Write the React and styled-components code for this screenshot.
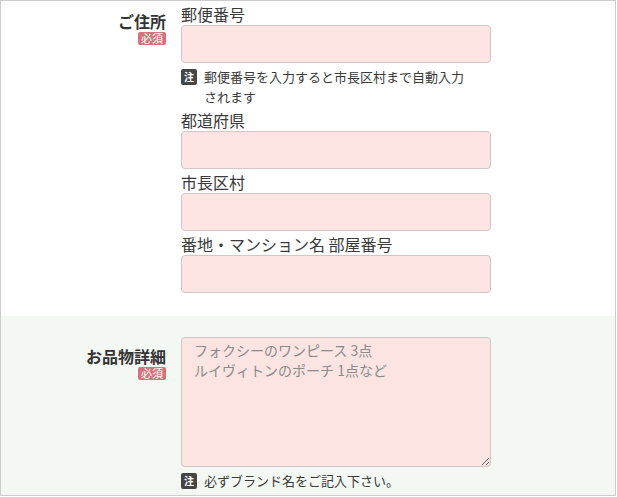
import React from "react";
import styled, { createGlobalStyle } from "styled-components";

const GlobalStyle = createGlobalStyle`
  body {
    margin: 0;
    background: #fff;
    font-family: "Noto Sans CJK JP", "Noto Sans", sans-serif;
    color: #333;
  }
`;

const FormTable = styled.div`
  width: 616px;
  box-sizing: border-box;
  border: 1px solid #ccc;
`;

const Row = styled.div`
  display: grid;
  grid-template-columns: 165px 310px;
  column-gap: 15px;
  padding: ${({ $pad }) => $pad};
  background: ${({ $bg }) => $bg};
`;

const Head = styled.div`
  display: flex;
  flex-direction: column;
  align-items: flex-end;
  padding-top: ${({ $top }) => $top}px;
`;

const HeadText = styled.div`
  font-size: 16px;
  font-weight: bold;
  line-height: 19px;
  color: #333;
`;

const Required = styled.span`
  display: inline-block;
  height: 13px;
  margin-top: 1px;
  padding: 0 3px;
  border-radius: 2px;
  background: #d6737a;
  color: #fff;
  font-size: 11px;
  line-height: 13px;
`;

const Fields = styled.div`
  display: flex;
  flex-direction: column;
`;

const FieldLabel = styled.label`
  display: block;
  padding-top: 2px;
  font-size: 16px;
  line-height: 22px;
  color: #3a3a3a;
`;

const TextInput = styled.input`
  display: block;
  width: 310px;
  height: 38px;
  box-sizing: border-box;
  margin: 0;
  border: 1px solid #d2c6c6;
  border-radius: 4px;
  background: #ffe4e4;
  outline: none;
`;

const TextArea = styled.textarea`
  display: block;
  width: 310px;
  height: 130px;
  box-sizing: border-box;
  margin: 0;
  padding: 2px 12px;
  border: 1px solid #d2c6c6;
  border-radius: 4px;
  background: #fbe4e2;
  font-family: "Noto Sans CJK JP", "Noto Sans", sans-serif;
  font-size: 14px;
  line-height: 20px;
  color: #333;
  outline: none;
  &::placeholder {
    color: #8a8a8a;
  }
`;

const Note = styled.div`
  display: flex;
  align-items: flex-start;
  gap: 7px;
  margin-top: 4px;
  max-width: ${({ $width }) => $width}px;
`;

const NoteMark = styled.span`
  flex: none;
  width: 16px;
  height: 16px;
  margin-top: 2px;
  border-radius: 2px;
  background: #454545;
  color: #fff;
  font-size: 10px;
  font-weight: bold;
  line-height: 16px;
  text-align: center;
`;

const NoteText = styled.span`
  font-size: 13px;
  line-height: 20px;
  color: #3a3a3a;
`;

const fieldNames = ["都道府県", "市長区村", "番地・マンション名 部屋番号"];

export default function App() {
  return (
    <>
      <GlobalStyle />
      <FormTable>
        <Row $pad="0 0 23px" $bg="#fff">
          <Head $top={11}>
            <HeadText>ご住所</HeadText>
            <Required>必須</Required>
          </Head>
          <Fields>
            <FieldLabel>郵便番号</FieldLabel>
            <TextInput type="text" />
            <Note $width={290}>
              <NoteMark>注</NoteMark>
              <NoteText>
                郵便番号を入力すると市長区村まで自動入力されます
              </NoteText>
            </Note>
            {fieldNames.map((name) => (
              <React.Fragment key={name}>
                <FieldLabel>{name}</FieldLabel>
                <TextInput type="text" />
              </React.Fragment>
            ))}
          </Fields>
        </Row>
        <Row $pad="21px 0 4px" $bg="#f3f8f3">
          <Head $top={10}>
            <HeadText>お品物詳細</HeadText>
            <Required>必須</Required>
          </Head>
          <Fields>
            <TextArea
              placeholder={"フォクシーのワンピース 3点\nルイヴィトンのポーチ 1点など"}
            />
            <Note $width={310}>
              <NoteMark>注</NoteMark>
              <NoteText>必ずブランド名をご記入下さい。</NoteText>
            </Note>
          </Fields>
        </Row>
      </FormTable>
    </>
  );
}
